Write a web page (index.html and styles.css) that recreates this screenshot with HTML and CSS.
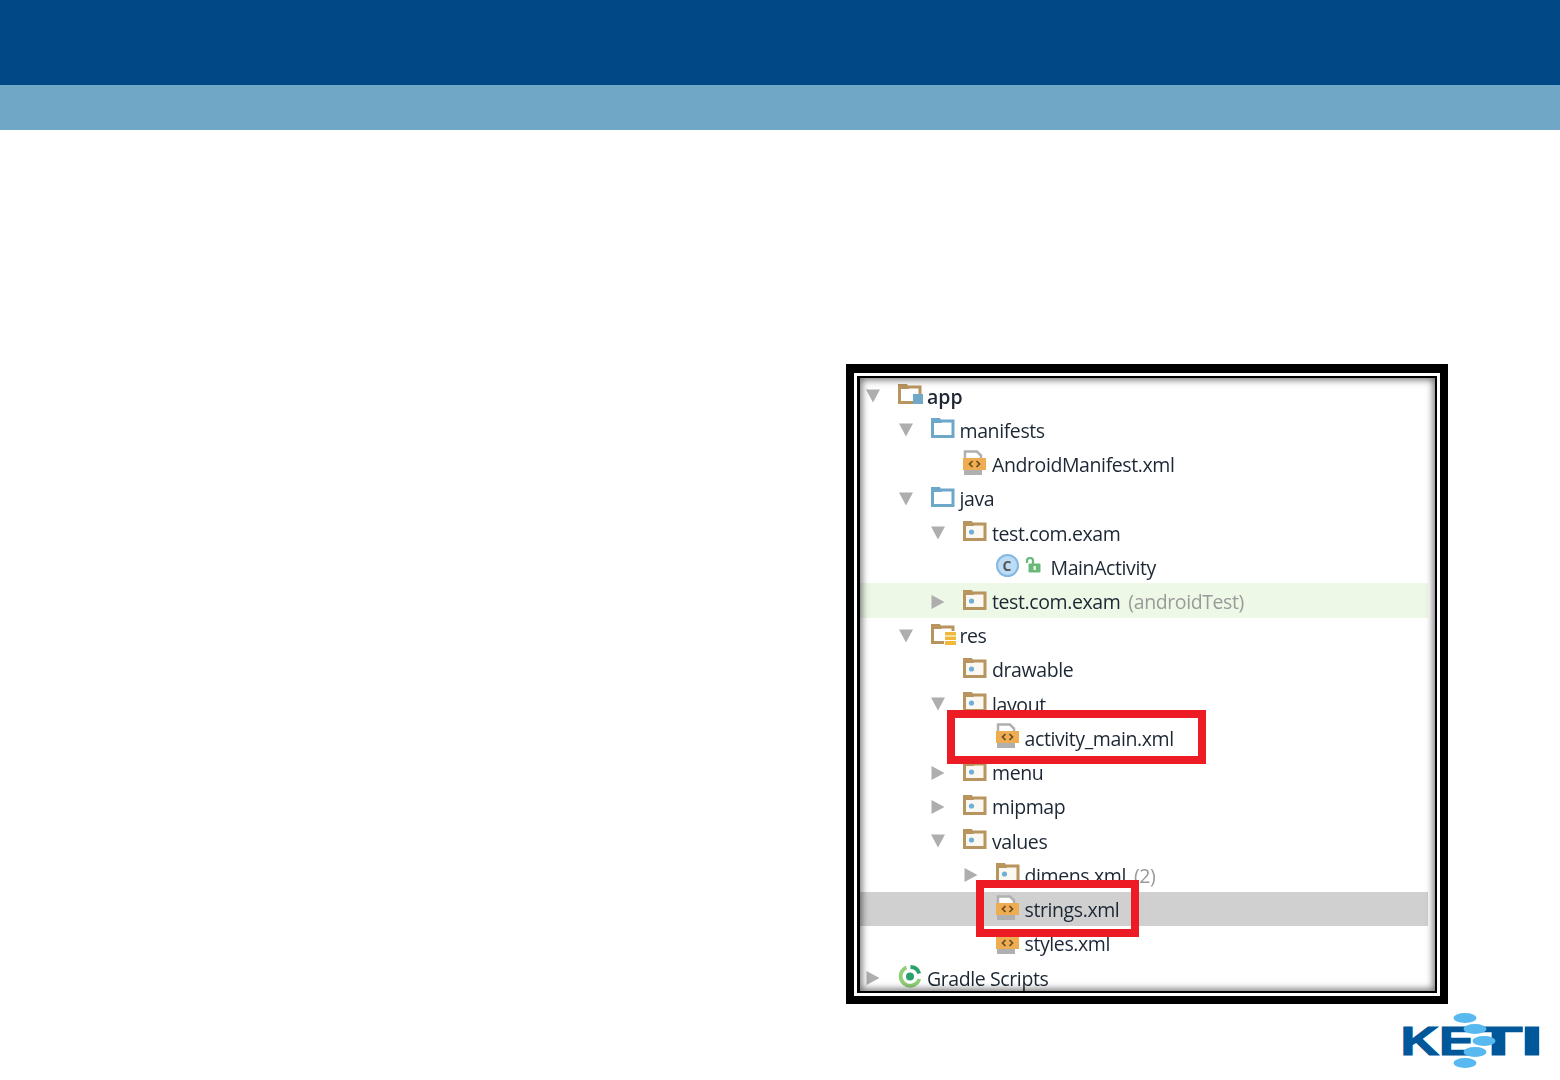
FILE: index.html
```html
<!DOCTYPE html>
<html lang="en">
<head>
<meta charset="utf-8">
<title>Project tree</title>
<link rel="stylesheet" href="styles.css">
</head>
<body>
<svg class="defs" width="0" height="0" aria-hidden="true">
  <defs>
    <symbol id="down" viewBox="0 0 14 14"><path d="M0 0.5H14L7 13.5Z"/></symbol>
    <symbol id="right" viewBox="0 0 14 14"><path d="M0.5 0L13.5 7L0.5 14Z"/></symbol>
    <symbol id="folder-blue" viewBox="0 0 24 24"><path d="M1.500 5H22V20.500H1.500Z" fill="#fff" stroke="#6da7c9" stroke-width="3"/><path d="M0 2H9L11 7H0Z" fill="#6da7c9"/></symbol>
    <symbol id="folder" viewBox="0 0 24 24"><path d="M1.500 5H22V20.500H1.500Z" fill="#fbf8f2" stroke="#b8945f" stroke-width="3"/><path d="M0 2H9L11 7H0Z" fill="#b8945f"/><circle cx="8.500" cy="13" r="2.600" fill="#6fb0d8"/></symbol>
    <symbol id="folder-app" viewBox="0 0 26 24"><path d="M1.500 5H22V20.500H1.500Z" fill="#fff" stroke="#b8945f" stroke-width="3"/><path d="M0 2H9L11 7H0Z" fill="#b8945f"/><rect x="15" y="12" width="10" height="10" fill="#6fa8c9"/></symbol>
    <symbol id="folder-res" viewBox="0 0 26 24"><path d="M1.500 5H22V20.500H1.500Z" fill="#fff" stroke="#b8945f" stroke-width="3"/><path d="M0 2H9L11 7H0Z" fill="#b8945f"/><rect x="13" y="9" width="13" height="15" rx="2" fill="#fff"/><path d="M14 10h11v3.500h-11zM14 14.500h11v3.500h-11zM14 19h11v4h-11z" fill="#efba3c"/></symbol>
    <symbol id="xml" viewBox="0 0 24 26"><path d="M2 8V1.500H14L18 5.500V8" fill="#fff" stroke="#b0b0b0" stroke-width="2.500"/><rect y="8" width="23" height="12" fill="#eead52"/><rect x="1" y="20" width="18" height="5" fill="#b0b0b0"/><path d="M9.500 11L6.500 14L9.500 17M13.500 11L16.500 14L13.500 17" fill="none" stroke="#6b4a1e" stroke-width="1.700"/></symbol>
    <symbol id="lock" viewBox="0 0 16 16"><path d="M8 7V3.800A3 2.800 0 0 0 2 3.800V6" fill="none" stroke="#6ab87a" stroke-width="2.200"/><rect x="3.500" y="6.500" width="12" height="9" rx="1" fill="#6ab87a"/><rect x="8.500" y="9" width="2.400" height="4" fill="#e8f5e8"/></symbol>
    <symbol id="gradle" viewBox="0 0 24 24"><path d="M8.500 3.500A9.500 9.500 0 1 0 21.300 15" fill="none" stroke="#8fcf77" stroke-width="3.800"/><path d="M12.500 3A9.500 9.500 0 0 1 21.300 9.500" fill="none" stroke="#2aa06d" stroke-width="3.800"/><circle cx="12" cy="12.500" r="4" fill="#2aa06d"/></symbol>
  </defs>
</svg>

<header class="top-bar"></header>
<div class="sub-bar"></div>

<main class="content">
  <div class="frame">
    <div class="frame-mid">
      <div class="frame-inner">
        <div class="tree">
          <div class="row l0"><svg class="arrow"><use href="#down"/></svg><svg class="icon wide"><use href="#folder-app"/></svg><span class="name bold">app</span></div>
          <div class="row l1"><svg class="arrow"><use href="#down"/></svg><svg class="icon"><use href="#folder-blue"/></svg><span class="name">manifests</span></div>
          <div class="row l2"><span class="arrow"></span><svg class="icon file"><use href="#xml"/></svg><span class="name">AndroidManifest.xml</span></div>
          <div class="row l1"><svg class="arrow"><use href="#down"/></svg><svg class="icon"><use href="#folder-blue"/></svg><span class="name">java</span></div>
          <div class="row l2"><svg class="arrow"><use href="#down"/></svg><svg class="icon"><use href="#folder"/></svg><span class="name">test.com.exam</span></div>
          <div class="row l3"><span class="arrow"></span><span class="class-badge">C</span><svg class="lock"><use href="#lock"/></svg><span class="name">MainActivity</span></div>
          <div class="row l2 tested"><svg class="arrow"><use href="#right"/></svg><svg class="icon"><use href="#folder"/></svg><span class="name">test.com.exam</span><span class="note">(androidTest)</span></div>
          <div class="row l1"><svg class="arrow"><use href="#down"/></svg><svg class="icon wide"><use href="#folder-res"/></svg><span class="name">res</span></div>
          <div class="row l2"><span class="arrow"></span><svg class="icon"><use href="#folder"/></svg><span class="name">drawable</span></div>
          <div class="row l2"><svg class="arrow"><use href="#down"/></svg><svg class="icon"><use href="#folder"/></svg><span class="name">layout</span></div>
          <div class="row l3"><span class="arrow"></span><svg class="icon file"><use href="#xml"/></svg><span class="name">activity_main.xml</span></div>
          <div class="row l2"><svg class="arrow"><use href="#right"/></svg><svg class="icon"><use href="#folder"/></svg><span class="name">menu</span></div>
          <div class="row l2"><svg class="arrow"><use href="#right"/></svg><svg class="icon"><use href="#folder"/></svg><span class="name">mipmap</span></div>
          <div class="row l2"><svg class="arrow"><use href="#down"/></svg><svg class="icon"><use href="#folder"/></svg><span class="name">values</span></div>
          <div class="row l3"><svg class="arrow"><use href="#right"/></svg><svg class="icon"><use href="#folder"/></svg><span class="name">dimens.xml</span><span class="note">(2)</span></div>
          <div class="row l3 selected"><span class="arrow"></span><svg class="icon file"><use href="#xml"/></svg><span class="name">strings.xml</span></div>
          <div class="row l3"><span class="arrow"></span><svg class="icon file"><use href="#xml"/></svg><span class="name">styles.xml</span></div>
          <div class="row l0"><svg class="arrow"><use href="#right"/></svg><svg class="icon"><use href="#gradle"/></svg><span class="name">Gradle Scripts</span></div>
        </div>
        <div class="mark mark-activity"></div>
        <div class="mark mark-strings"></div>
      </div>
    </div>
  </div>
</main>

<footer class="footer">
  <svg class="logo" viewBox="0 0 145 62" role="img" aria-label="KETI">
    <text class="logo-text" x="0.500" y="45" textLength="74" lengthAdjust="spacingAndGlyphs">KE</text>
    <text class="logo-text" x="74.500" y="45" textLength="48" lengthAdjust="spacingAndGlyphs">T</text>
    <text class="logo-text" x="120.500" y="45" textLength="23" lengthAdjust="spacingAndGlyphs">I</text>
    <ellipse class="dot" cx="65" cy="8" rx="11.500" ry="5"/>
    <ellipse class="dot" cx="75" cy="19" rx="11.500" ry="5"/>
    <ellipse class="dot" cx="84" cy="31" rx="11.500" ry="5"/>
    <ellipse class="dot" cx="75" cy="42" rx="11.500" ry="5"/>
    <ellipse class="dot" cx="65" cy="53" rx="11.500" ry="5"/>
  </svg>
</footer>
</body>
</html>
```

FILE: styles.css
```css
* { box-sizing: border-box; }
html, body { margin: 0; padding: 0; }
body { width: 1560px; height: 1080px; overflow: hidden; background: #fff; font-family: "Open Sans", "Noto Sans", sans-serif; }
.defs { position: absolute; }

.top-bar { height: 85px; background: #014886; }
.sub-bar { height: 45px; background: #70a6c6; }

.content { padding: 234px 0 0 846px; height: 874px; }
.frame { width: 602px; height: 640px; background: #000; padding: 9px 8px 8px; }
.frame-mid { height: 100%; border: 3px solid #fff; }
.frame-inner { position: relative; height: 100%; background: #000; padding: 2px 2px 2px 3px; overflow: hidden; }
.frame-inner::after { content: ""; position: absolute; inset: 2px 2px 2px 3px; box-shadow: inset 0 0 7px 2px rgba(0,0,0,.55); pointer-events: none; }

.tree { height: 100%; padding-right: 7px; background: #fff; overflow: hidden; filter: blur(.5px); color: #1c2733; font-size: 19.5px; letter-spacing: -.4px; }
.row { display: flex; align-items: center; height: 34.24px; white-space: nowrap; }
.l0 { padding-left: 6px; }
.l1 { padding-left: 38.5px; }
.l2 { padding-left: 71px; }
.l3 { padding-left: 103.5px; }
.arrow { flex: none; width: 14px; height: 14px; margin: 2px 18px 0 0; fill: #aeaeae; }
.icon { flex: none; width: 24px; height: 24px; margin: -2px 5px 0 0; }
.icon.wide { width: 26px; margin-right: 3px; }
.icon.file { height: 26px; }
.class-badge { flex: none; display: flex; align-items: center; justify-content: center; width: 23px; height: 23px; margin: -2px 6px 0 0; border-radius: 50%; background: #bcdcf5; border: 2px solid #82b8e2; color: #555; font-size: 14px; font-weight: 700; letter-spacing: 0; }
.lock { flex: none; width: 16px; height: 16px; margin: -2px 10px 0 0; }
.name { position: relative; top: 1px; }
.bold { font-weight: 600; letter-spacing: 0; }
.note { position: relative; top: 1px; margin-left: 8px; color: #9a9a9a; }
.tested { background: #edf8e6; }
.selected { background: #d0d0d0; }

.mark { position: absolute; border: 8px solid #ed1c24; }
.mark-activity { left: 90px; top: 334px; width: 259px; height: 54px; }
.mark-strings { left: 119px; top: 504px; width: 163px; height: 57px; }

.footer { display: flex; justify-content: flex-end; padding-right: 15px; height: 76px; padding-top: 6px; }
.logo { width: 145px; height: 62px; }
.logo-text { font-family: "Liberation Sans", sans-serif; font-weight: 700; font-size: 40px; fill: #00579a; stroke: #00579a; stroke-width: 1.2px; }
.dot { fill: #58b9f0; }
```
